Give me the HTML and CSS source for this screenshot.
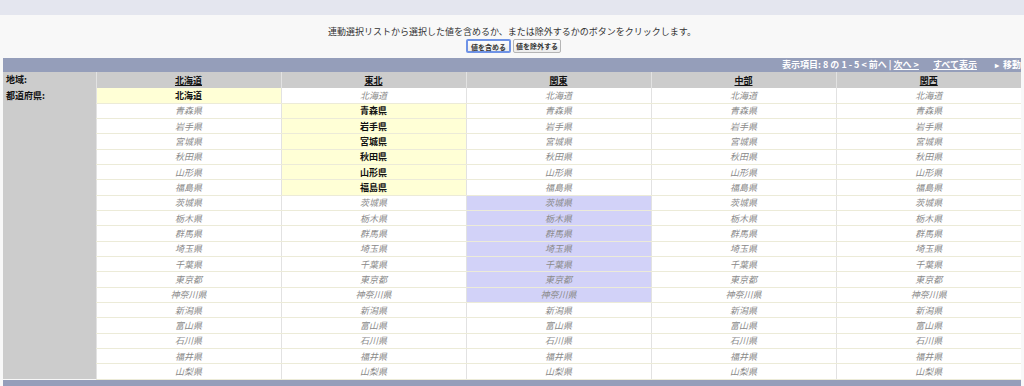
FILE: index.html
```html
<!DOCTYPE html>
<html lang="ja">
<head>
    <meta charset="UTF-8">
    <title>値の選択</title>
    <link rel="stylesheet" href="styles.css">
</head>
<body>
    <div class="topband"></div>
    <div class="intro">
        <p>連動選択リストから選択した値を含めるか、または除外するかのボタンをクリックします。</p>
        <div class="actions">
            <button class="btn btn-focus">値を含める</button>
            <button class="btn">値を除外する</button>
        </div>
    </div>
    <div class="panel">
        <div class="pager">
            <span>表示項目: 8 の 1 - 5 &lt; 前へ | <a href="#">次へ &gt;</a></span>
            <a href="#" class="all">すべて表示</a>
            <span class="go"><span class="tri">&#9656;</span> 移動</span>
        </div>
        <table class="matrix">
            <thead>
                <tr>
                    <th class="label">地域:</th>
                    <th><a href="#">北海道</a></th>
                    <th><a href="#">東北</a></th>
                    <th><a href="#">関東</a></th>
                    <th><a href="#">中部</a></th>
                    <th><a href="#">関西</a></th>
                </tr>
            </thead>
            <tbody id="rows">
            </tbody>
        </table>
        <div class="footbar"></div>
    </div>
    <script>
        var prefs = ['北海道', '青森県', '岩手県', '宮城県', '秋田県', '山形県', '福島県',
            '茨城県', '栃木県', '群馬県', '埼玉県', '千葉県', '東京都', '神奈川県',
            '新潟県', '富山県', '石川県', '福井県', '山梨県'];
        // 各地域に含まれる都道府県の範囲
        var regions = [[0, 0, 'yellow'], [1, 6, 'yellow'], [7, 13, 'blue'], [-1, -1, ''], [-1, -1, '']];
        var tbody = document.getElementById('rows');
        prefs.forEach(function (name, i) {
            var tr = document.createElement('tr');
            if (i === 0) {
                var lab = document.createElement('td');
                lab.className = 'label';
                lab.rowSpan = prefs.length;
                lab.textContent = '都道府県:';
                tr.appendChild(lab);
            }
            regions.forEach(function (r) {
                var td = document.createElement('td');
                td.textContent = name;
                if (i >= r[0] && i <= r[1]) {
                    td.className = 'on ' + r[2];
                }
                tr.appendChild(td);
            });
            tbody.appendChild(tr);
        });
    </script>
</body>
</html>
```

FILE: styles.css
```css
* {
    box-sizing: border-box;
}

body {
    margin: 0;
    background-color: #f8f8f8;
    font-family: "Noto Sans CJK JP", "Noto Sans", sans-serif;
    font-size: 9px;
    color: #222;
}

.topband {
    height: 15px;
    background-color: #e4e6ef;
}

.intro {
    text-align: center;
    padding-top: 10px;
}

.intro p {
    margin: 0;
    line-height: 13px;
    color: #333;
}

.actions {
    display: flex;
    justify-content: center;
    gap: 2px;
    margin-top: 1px;
    padding-left: 3px;
}

.btn {
    font-family: inherit;
    font-size: 7px;
    font-weight: bold;
    color: #333;
    height: 14px;
    padding: 0 2px;
    line-height: 12px;
    background: linear-gradient(#fdfdfd, #ececec);
    border: 1px solid #b5b5b5;
    border-radius: 2px;
}

.btn-focus {
    border: 2px solid #6f93e6;
    padding: 0 3px;
}

.panel {
    margin: 5px 3px 0;
}

.pager {
    height: 14px;
    background-color: #959eba;
    color: #fff;
    font-weight: bold;
    display: flex;
    justify-content: flex-end;
    align-items: center;
    gap: 14px;
    line-height: 14px;
}

.pager a {
    color: #fff;
}

.pager .all {
    padding-right: 4px;
}

.tri {
    font-size: 8px;
    margin-right: 2px;
}

.matrix {
    width: 100%;
    border-collapse: collapse;
    table-layout: fixed;
}

.matrix th {
    height: 16px;
    background-color: #cccccc;
    border-left: 1px solid #e2e2e2;
    font-weight: bold;
    text-align: center;
    padding: 0;
}

.matrix th a {
    color: #111;
    text-decoration: underline;
    padding: 0 2px;
}

.matrix .label {
    width: 93px;
    background-color: #cccccc;
    text-align: left;
    vertical-align: top;
    font-weight: bold;
    color: #111;
    padding: 1px 3px;
    border-left: none;
}

.matrix td {
    height: 15.33px;
    padding: 0;
    text-align: center;
    font-style: italic;
    color: #8a8a8a;
    background-color: #fff;
    border-bottom: 1px solid #ecebd8;
    border-left: 1px solid #e2e2e2;
}

.matrix td.label {
    font-style: normal;
    line-height: 14px;
    padding-top: 1px;
    border-bottom: none;
}

.matrix td.on {
    font-style: normal;
    font-weight: bold;
    color: #111;
}

.matrix td.yellow {
    background-color: #ffffd6;
}

.matrix td.blue {
    background-color: #d2d2f8;
    font-weight: normal;
    font-style: italic;
    color: #8a8a8a;
}

.footbar {
    height: 6px;
    background-color: #959eba;
}
```
